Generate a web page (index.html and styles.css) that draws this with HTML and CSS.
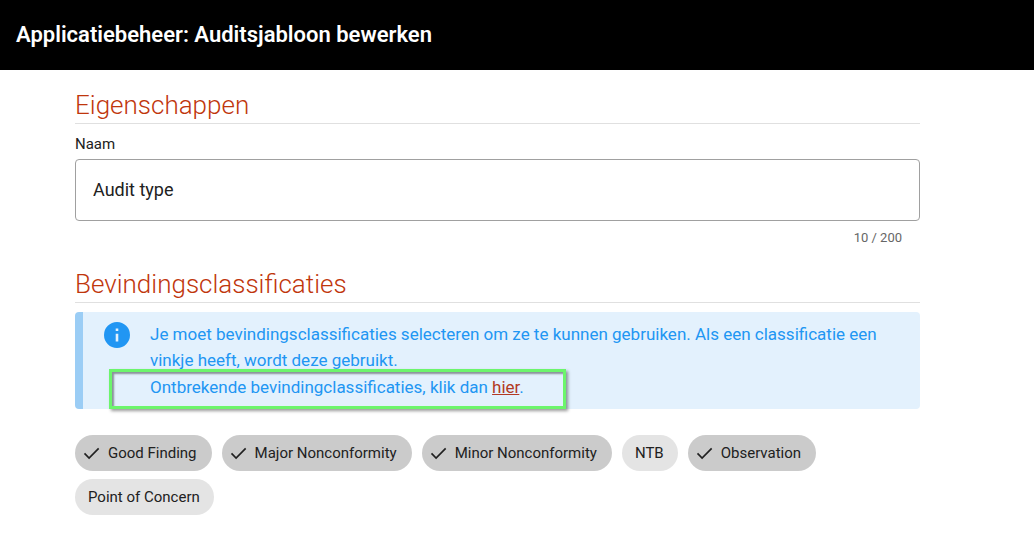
FILE: index.html
```html
<!DOCTYPE html>
<html lang="nl">
<head>
    <meta charset="UTF-8">
    <meta name="viewport" content="width=device-width, initial-scale=1.0">
    <title>Auditsjabloon bewerken</title>
    <link rel="stylesheet" href="styles.css">
</head>
<body>
    <header class="toolbar">
        <h1>Applicatiebeheer: Auditsjabloon bewerken</h1>
    </header>

    <main class="content">
        <section class="properties">
            <h2>Eigenschappen</h2>
            <label for="name">Naam</label>
            <input type="text" id="name" value="Audit type" maxlength="200">
            <div class="counter">10 / 200</div>
        </section>

        <section class="classifications">
            <h2>Bevindingsclassificaties</h2>

            <div class="alert">
                <svg class="alert-icon" viewBox="2 2 20 20" aria-hidden="true">
                    <path fill="currentColor" d="M13 9h-2V7h2m0 10h-2v-6h2m-1-9A10 10 0 0 0 2 12a10 10 0 0 0 10 10 10 10 0 0 0 10-10A10 10 0 0 0 12 2z"/>
                </svg>
                <div class="alert-text">
                    <p>Je moet bevindingsclassificaties selecteren om ze te kunnen gebruiken. Als een classificatie een vinkje heeft, wordt deze gebruikt.</p>
                    <p class="highlight">Ontbrekende bevindingclassificaties, klik dan <a href="#">hier</a>.</p>
                </div>
            </div>

            <div class="chips">
                <button type="button" class="chip selected" aria-pressed="true">
                    <svg class="check" viewBox="0 0 24 24" aria-hidden="true"><path d="M3 12.5l5.5 5.5L20 6.5"/></svg>
                    Good Finding
                </button>
                <button type="button" class="chip selected" aria-pressed="true">
                    <svg class="check" viewBox="0 0 24 24" aria-hidden="true"><path d="M3 12.5l5.5 5.5L20 6.5"/></svg>
                    Major Nonconformity
                </button>
                <button type="button" class="chip selected" aria-pressed="true">
                    <svg class="check" viewBox="0 0 24 24" aria-hidden="true"><path d="M3 12.5l5.5 5.5L20 6.5"/></svg>
                    Minor Nonconformity
                </button>
                <button type="button" class="chip" aria-pressed="false">NTB</button>
                <button type="button" class="chip selected" aria-pressed="true">
                    <svg class="check" viewBox="0 0 24 24" aria-hidden="true"><path d="M3 12.5l5.5 5.5L20 6.5"/></svg>
                    Observation
                </button>
                <button type="button" class="chip" aria-pressed="false">Point of Concern</button>
            </div>
        </section>
    </main>
</body>
</html>
```
FILE: styles.css
```css
* {
    box-sizing: border-box;
}

body {
    margin: 0;
    font-family: Roboto, Arial, sans-serif;
    color: #212121;
    background-color: #fff;
}

.toolbar {
    display: flex;
    align-items: center;
    min-height: 70px;
    padding: 0 16px 2px;
    background-color: #000;
}

.toolbar h1 {
    margin: 0;
    font-size: 22px;
    font-weight: 600;
    color: #fff;
}

.content {
    padding: 18px 114px 20px 75px;
}

.content h2 {
    margin: 0 0 9px 0;
    padding-bottom: 1px;
    border-bottom: 1px solid #e0e0e0;
    font-size: 26px;
    line-height: 34px;
    font-weight: 300;
    color: #bf360c;
}

label {
    display: block;
    margin-bottom: 4px;
    font-size: 15px;
    line-height: 22px;
}

input {
    display: block;
    width: 100%;
    height: 62px;
    padding: 0 17px 2px;
    border: 1px solid #a0a0a0;
    border-radius: 4px;
    font-family: inherit;
    font-size: 18px;
    color: #212121;
}

.counter {
    padding: 8px 18px 0 0;
    font-size: 13px;
    line-height: 18px;
    text-align: right;
    color: #666;
}

.classifications {
    margin-top: 20px;
}

.alert {
    display: flex;
    gap: 20px;
    padding: 9px 18px 9px 21px;
    border-left: 8px solid #9bcdf5;
    border-radius: 4px;
    background-color: #e3f1fd;
    color: #2196f3;
}

.alert-icon {
    flex: none;
    width: 26px;
    height: 26px;
    margin-top: 1px;
}

.alert-text {
    font-size: 17px;
    line-height: 26px;
}

.alert-text p {
    margin: 0;
}

.alert-text p + p {
    margin-top: 1px;
}

.alert-text a {
    color: #b23a24;
}

.highlight {
    position: relative;
    width: fit-content;
}

/* green marker frame around the line */
.highlight::after {
    content: "";
    position: absolute;
    top: -5px;
    right: -42px;
    bottom: -9px;
    left: -41px;
    border: 3px solid #6cf56c;
    box-shadow: 2px 2px 3px rgba(0, 0, 0, 0.4), inset 2px 2px 2px rgba(0, 0, 0, 0.4);
    pointer-events: none;
}

.chips {
    display: flex;
    flex-wrap: wrap;
    gap: 8px 10px;
    margin-top: 26px;
}

.chip {
    display: inline-flex;
    align-items: center;
    gap: 6px;
    height: 36px;
    padding: 0 14px 0 13px;
    border: none;
    border-radius: 18px;
    background-color: #e4e4e4;
    font-family: inherit;
    font-size: 15px;
    color: #212121;
    cursor: pointer;
}

.chip.selected {
    padding-left: 7px;
    padding-right: 15px;
    background-color: #cbcbcb;
}

.check {
    width: 20px;
    height: 20px;
    fill: none;
    stroke: currentColor;
    stroke-width: 2;
}
```
